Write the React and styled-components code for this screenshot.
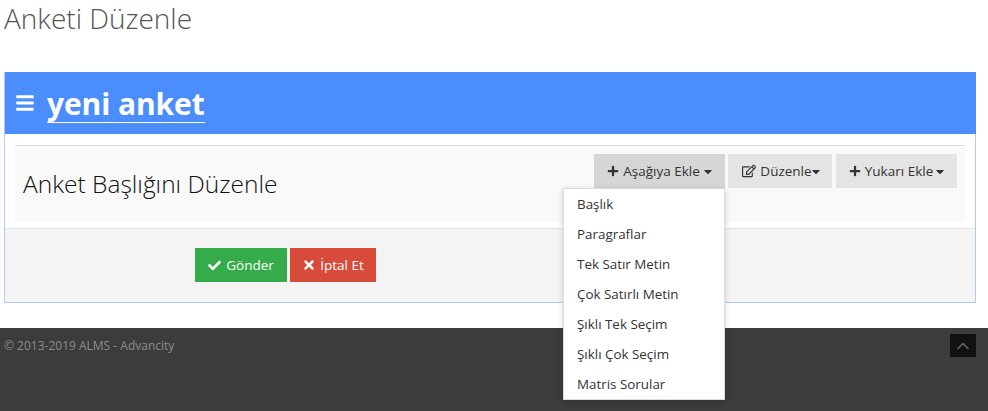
import React from "react";
import styled, { createGlobalStyle } from "styled-components";
import { FaBars, FaPlus, FaRegEdit, FaCheck, FaTimes, FaCaretDown } from "react-icons/fa";
import { FiChevronUp } from "react-icons/fi";

const MENU_ITEMS = [
  "Başlık",
  "Paragraflar",
  "Tek Satır Metin",
  "Çok Satırlı Metin",
  "Şıklı Tek Seçim",
  "Şıklı Çok Seçim",
  "Matris Sorular",
];

const GlobalStyle = createGlobalStyle`
  html, body {
    margin: 0;
    padding: 0;
    background: #fff;
    font-family: "Open Sans", sans-serif;
    overflow: hidden;
  }
`;

const Page = styled.div`
  width: 988px;
  height: 411px;
  display: flex;
  flex-direction: column;
`;

const PageTitle = styled.h1`
  margin: 0 0 31px;
  padding-left: 4px;
  height: 41px;
  font-size: 28px;
  line-height: 36px;
  font-weight: 300;
  color: #555;
`;

const Panel = styled.section`
  width: 972px;
  height: 231px;
  margin-left: 4px;
  box-sizing: border-box;
  border: 1px solid #aecbf5;
  border-top: 0;
  display: flex;
  flex-direction: column;
`;

const PanelHeader = styled.header`
  height: 62px;
  background: #4b8dfb;
  margin: 0 -1px 0 0;
  display: flex;
  align-items: center;
  padding-left: 10px;
  gap: 12px;
  color: #fff;
`;

const HeaderName = styled.span`
  font-size: 30px;
  line-height: 36px;
  font-weight: 700;
  border-bottom: 1px solid #fff;
  margin-top: 3px;
  width: 158px;
  white-space: nowrap;
  letter-spacing: -0.1px;
`;

const PanelBody = styled.div`
  height: 95px;
  box-sizing: border-box;
  padding: 11px 10px 0;
  border-bottom: 1px solid #e2e2e2;
`;

const QuestionRow = styled.div`
  height: 77px;
  box-sizing: border-box;
  border-top: 1px solid #ddd;
  background: #f9f9f9;
  display: flex;
  align-items: center;
  justify-content: space-between;
  padding: 0 8px;
`;

const QuestionTitle = styled.h2`
  margin: 0 0 1px;
  font-size: 24.5px;
  line-height: 32px;
  font-weight: 300;
  color: #111;
`;

const Actions = styled.div`
  display: flex;
  align-self: flex-start;
  margin-top: 8px;
  gap: 3px;
`;

const ActionWrap = styled.div`
  position: relative;
`;

const ActionButton = styled.button`
  height: 34px;
  width: ${(p) => p.$width}px;
  margin-left: ${(p) => p.$gap || 0}px;
  border: 0;
  padding: 0 0 0 ${(p) => p.$nudge || 0}px;
  background: ${(p) => (p.$open ? "#d6d6d6" : "#e4e4e4")};
  color: #333;
  font: 400 13.5px "Open Sans", sans-serif;
  display: flex;
  align-items: center;
  justify-content: center;
  gap: 4px;
  svg {
    flex: none;
  }
`;

const Caret = styled(FaCaretDown)`
  width: 8px;
  height: 13px;
  margin-left: ${(p) => p.$pull || 0}px;
`;

const Menu = styled.ul`
  position: absolute;
  top: 34px;
  right: 0;
  width: 162px;
  height: 212px;
  box-sizing: border-box;
  margin: 0;
  padding: 0;
  list-style: none;
  background: #fff;
  border: 1px solid #ddd;
  box-shadow: 0 2px 6px rgba(0, 0, 0, 0.18);
  z-index: 5;
`;

const MenuItem = styled.li`
  height: 30px;
  line-height: 30px;
  padding-left: 13px;
  font-size: 13.4px;
  color: #333;
`;

const PanelFooter = styled.div`
  flex: 1;
  background: #f4f4f4;
  display: flex;
  gap: 3px;
  padding: 19px 0 0 190px;
`;

const SubmitButton = styled.button`
  height: 34px;
  width: ${(p) => p.$width}px;
  border: 0;
  padding: 0;
  background: ${(p) => p.$bg};
  color: #fff;
  font: 400 13.5px "Open Sans", sans-serif;
  display: flex;
  align-items: center;
  justify-content: center;
  gap: ${(p) => p.$iconGap}px;
`;

const Footer = styled.footer`
  margin-top: 25px;
  flex: 1;
  background: #3c3c3c;
  display: flex;
  justify-content: space-between;
  align-items: flex-start;
  padding: 6px 12px 0 4px;
`;

const Copyright = styled.span`
  font-size: 12px;
  line-height: 24px;
  color: #8b8b8b;
`;

const ScrollTop = styled.a`
  width: 26px;
  height: 23px;
  background: #111;
  color: #666;
  display: flex;
  align-items: center;
  justify-content: center;
`;

const App = () => {
  return (
    <Page>
      <GlobalStyle />
      <PageTitle>Anketi Düzenle</PageTitle>
      <Panel>
        <PanelHeader>
          <FaBars size={20} />
          <HeaderName>yeni anket</HeaderName>
        </PanelHeader>
        <PanelBody>
          <QuestionRow>
            <QuestionTitle>Anket Başlığını Düzenle</QuestionTitle>
            <Actions>
              <ActionWrap>
                <ActionButton $width={131} $open>
                  <FaPlus size={12} /> Aşağıya Ekle <Caret />
                </ActionButton>
                <Menu>
                  {MENU_ITEMS.map((item) => (
                    <MenuItem key={item}>{item}</MenuItem>
                  ))}
                </Menu>
              </ActionWrap>
              <ActionButton $width={104} $nudge={2}>
                <FaRegEdit size={14} /> Düzenle
                <Caret $pull={-4} />
              </ActionButton>
              <ActionButton $width={121} $gap={1}>
                <FaPlus size={12} /> Yukarı Ekle <Caret $pull={-1} />
              </ActionButton>
            </Actions>
          </QuestionRow>
        </PanelBody>
        <PanelFooter>
          <SubmitButton $width={92} $bg="#35ab4a" $iconGap={5}>
            <FaCheck size={13} /> Gönder
          </SubmitButton>
          <SubmitButton $width={86} $bg="#d84b3a" $iconGap={4}>
            <FaTimes size={14} /> İptal Et
          </SubmitButton>
        </PanelFooter>
      </Panel>
      <Footer>
        <Copyright>© 2013-2019 ALMS - Advancity</Copyright>
        <ScrollTop>
          <FiChevronUp size={20} />
        </ScrollTop>
      </Footer>
    </Page>
  );
};

export default App;
